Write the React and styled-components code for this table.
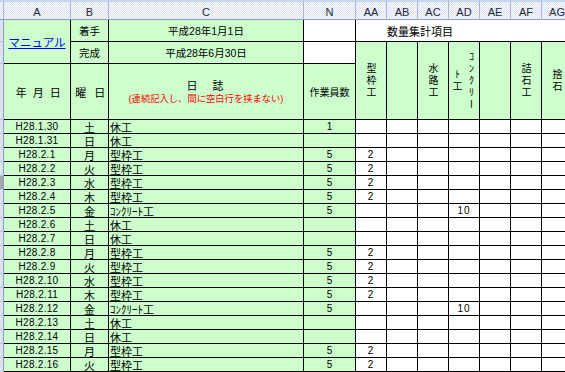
import React from "react";
import styled, { createGlobalStyle } from "styled-components";

const LATIN = `"Liberation Sans", "Noto Sans CJK JP", sans-serif`;
const CJK = `"Noto Sans CJK JP", sans-serif`;

const GlobalStyle = createGlobalStyle`
  html, body {
    margin: 0;
    padding: 0;
    background: #fff;
    overflow: hidden;
  }
`;

const Sheet = styled.div`
  display: grid;
  grid-template-columns: 4px 67px 38px 195px 52px repeat(7, 31px);
  grid-template-rows: 20px 22px 22px 56px repeat(18, 14px);
  width: 565px;
  height: 372px;
  overflow: hidden;
  font-family: ${LATIN};
  color: #000;
`;

/* column letters strip (A, B, C ...) */
const ColHead = styled.div`
  box-sizing: border-box;
  border-top: 2px solid #c9d4ee;
  border-right: 1px solid #a9b7d6;
  border-bottom: 1px solid #8e9dc2;
  background: repeating-conic-gradient(#f7f9fd 0 25%, #dde3f0 0 50%) 0 0 / 2px 2px;
  display: flex;
  align-items: center;
  justify-content: center;
  padding-top: 2px;
  font-size: 11px;
  line-height: 14px;
  color: #1e2a3a;
`;

/* row number strip, cut off on the left */
const RowHead = styled.div`
  box-sizing: border-box;
  background: ${(p) => (p.$active ? "#a4a4ae" : "#dde2f2")};
  border-right: 1px solid #8c9bc2;
  border-bottom: 1px solid #b6bfdc;
`;

const Cell = styled.div`
  box-sizing: border-box;
  grid-column: span ${(p) => p.$cols || 1};
  grid-row: span ${(p) => p.$rows || 1};
  background: ${(p) => (p.$white ? "#fff" : "#ccffcc")};
  border-right: 1px solid #000;
  border-bottom: 1px solid #000;
  display: flex;
  flex-direction: ${(p) => (p.$stack ? "column" : "row")};
  align-items: center;
  justify-content: ${(p) => p.$align || "center"};
  padding-left: ${(p) => p.$pad || 0}px;
  font-size: 10px;
  line-height: 13px;
  white-space: nowrap;
  overflow: hidden;
`;

const Label = styled.span`
  font-family: ${CJK};
  font-size: ${(p) => p.$size || 10.5}px;
  letter-spacing: ${(p) => p.$spacing || 0}px;
  line-height: 14px;
`;

const Mixed = styled.span`
  font-family: ${LATIN};
  font-size: 10.5px;
  line-height: 14px;
`;

const Manual = styled.a`
  font-family: ${CJK};
  font-size: 11.5px;
  color: #0000ff;
  text-decoration: underline;
  line-height: 14px;
`;

const Note = styled.span`
  font-family: ${LATIN};
  font-size: 9.3px;
  color: #ff0000;
  line-height: 14px;
`;

const VText = styled.span`
  writing-mode: vertical-rl;
  text-orientation: upright;
  font-family: ${CJK};
  font-size: 10px;
  letter-spacing: 2px;
  line-height: 14px;
  text-align: center;
`;

const Num = styled.span`
  font-family: "Liberation Sans", sans-serif;
  font-size: 10px;
  line-height: 12px;
  letter-spacing: ${(p) => p.$spacing || 0}px;
`;

const Work = styled.span`
  font-family: ${CJK};
  font-size: 11px;
  line-height: 12px;
`;

const cols = ["A", "B", "C", "N", "AA", "AB", "AC", "AD", "AE", "AF", "AG"];
const itemCols = ["AA", "AB", "AC", "AD", "AE", "AF", "AG"];

const diary = [
  ["H28.1.30", "土", "休工"],
  ["H28.1.31", "日", "休工"],
  ["H28.2.1", "月", "型枠工"],
  ["H28.2.2", "火", "型枠工"],
  ["H28.2.3", "水", "型枠工"],
  ["H28.2.4", "木", "型枠工"],
  ["H28.2.5", "金", "ｺﾝｸﾘｰﾄ工"],
  ["H28.2.6", "土", "休工"],
  ["H28.2.7", "日", "休工"],
  ["H28.2.8", "月", "型枠工"],
  ["H28.2.9", "火", "型枠工"],
  ["H28.2.10", "水", "型枠工"],
  ["H28.2.11", "木", "型枠工"],
  ["H28.2.12", "金", "ｺﾝｸﾘｰﾄ工"],
  ["H28.2.13", "土", "休工"],
  ["H28.2.14", "日", "休工"],
  ["H28.2.15", "月", "型枠工"],
  ["H28.2.16", "火", "型枠工"],
];

const quantities = (work, i) => {
  if (work === "型枠工") return { n: "5", AA: "2" };
  if (work === "ｺﾝｸﾘｰﾄ工") return { n: "5", AD: "10" };
  return { n: i === 0 ? "1" : "" };
};

// vertical item headings, one per quantity column (null = two-line concrete)
const items = ["型枠工", "", "水路工", null, "", "詰石工", "捨石"];

export default function App() {
  return (
    <>
      <GlobalStyle />
      <Sheet>
        <ColHead />
        {cols.map((c) => (
          <ColHead key={c}>{c}</ColHead>
        ))}

        {/* row 1 */}
        <RowHead />
        <Cell $rows={2}>
          <Manual href="#">マニュアル</Manual>
        </Cell>
        <Cell>
          <Label>着手</Label>
        </Cell>
        <Cell>
          <Mixed>平成28年1月1日</Mixed>
        </Cell>
        <Cell $white />
        <Cell $cols={7} $white $align="flex-start" $pad={31}>
          <Label $size={11}>数量集計項目</Label>
        </Cell>

        {/* row 2 */}
        <RowHead />
        <Cell>
          <Label>完成</Label>
        </Cell>
        <Cell>
          <Mixed>平成28年6月30日</Mixed>
        </Cell>
        <Cell $white />
        {items.map((it, i) => (
          <Cell key={i} $rows={2}>
            {it === null ? (
              <VText>
                ｺﾝｸﾘー
                <br />
                ﾄ工
              </VText>
            ) : (
              it && <VText>{it}</VText>
            )}
          </Cell>
        ))}

        {/* row 3 */}
        <RowHead />
        <Cell>
          <Label $size={11} $spacing={-2.5}>年　月　日</Label>
        </Cell>
        <Cell>
          <Label $size={11} $spacing={-1.5}>曜　日</Label>
        </Cell>
        <Cell $stack>
          <Label $size={11} $spacing={2}>日　誌</Label>
          <Note>(連続記入し、間に空白行を挟まない)</Note>
        </Cell>
        <Cell>
          <Label $size={10}>作業員数</Label>
        </Cell>

        {diary.map(([date, day, work], i) => {
          const q = quantities(work, i);
          return (
            <React.Fragment key={date}>
              <RowHead $active={i === 4} />
              <Cell>
                <Num $spacing={0.3}>{date}</Num>
              </Cell>
              <Cell>
                <Work>{day}</Work>
              </Cell>
              <Cell $align="flex-start" $pad={1}>
                <Work>{work}</Work>
              </Cell>
              <Cell>
                <Num>{q.n}</Num>
              </Cell>
              {itemCols.map((c) => (
                <Cell key={c} $white>
                  <Num $spacing={1}>{q[c] || ""}</Num>
                </Cell>
              ))}
            </React.Fragment>
          );
        })}
      </Sheet>
    </>
  );
}
